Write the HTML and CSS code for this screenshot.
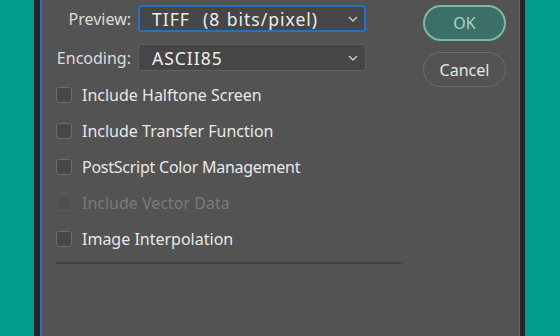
FILE: index.html
```html
<!DOCTYPE html>
<html lang="en">
<head>
<meta charset="utf-8" />
<title>EPS Options</title>
<link rel="stylesheet" href="styles.css">
</head>
<body>
	<div class="frame">
		<div class="dialog">
			<div class="main">
				<div class="fields">
					<label class="fieldLabel">Preview:</label>
					<div class="select focused">
						<span class="selectValue">TIFF&nbsp; (8 bits/pixel)</span>
						<svg class="chevron" width="10" height="6" viewBox="0 0 10 6"><path d="M1 1 L5 5 L9 1" fill="none" stroke="#c4c4c4" stroke-width="1.5"/></svg>
					</div>
					<label class="fieldLabel">Encoding:</label>
					<div class="select">
						<span class="selectValue">ASCII85</span>
						<svg class="chevron" width="10" height="6" viewBox="0 0 10 6"><path d="M1 1 L5 5 L9 1" fill="none" stroke="#c4c4c4" stroke-width="1.5"/></svg>
					</div>
				</div>

				<ul class="optionList">
					<li class="option"><span class="checkbox"></span>Include Halftone Screen</li>
					<li class="option"><span class="checkbox"></span>Include Transfer Function</li>
					<li class="option tight"><span class="checkbox"></span>PostScript Color Management</li>
					<li class="option disabled"><span class="checkbox"></span>Include Vector Data</li>
					<li class="option"><span class="checkbox"></span>Image Interpolation</li>
				</ul>
				<hr class="divider" />
			</div>
			<div class="buttons">
				<div class="button primary">OK</div>
				<div class="button">Cancel</div>
			</div>
		</div>
	</div>
</body>
</html>
```
FILE: styles.css
```css
html, body {
	margin: 0;
	height: 100%;
}

body {
	background-color: #009d8f;
	font-family: "Noto Sans", sans-serif;
	font-size: 16px;
	color: #e6e6e6;
	overflow: hidden;
}

.frame {
	margin-left: 34px;
	width: 480px;
	height: 100%;
	border-left: 6px solid #262626;
	border-right: 5px solid #262626;
}

.dialog {
	display: flex;
	height: 100%;
	background-color: #535353;
	border-left: 2px solid #2a6fc4;
	border-right: 1px solid #2a6fc4;
	padding-top: 5px;
	box-sizing: border-box;
}

.main {
	width: 346px;
	padding-left: 14px;
}

.fields {
	display: grid;
	grid-template-columns: 75px 228px;
	column-gap: 7px;
	row-gap: 12px;
	align-items: center;
}

.fieldLabel {
	text-align: right;
	color: #dcdcdc;
	white-space: nowrap;
}

.select {
	display: flex;
	align-items: center;
	justify-content: space-between;
	height: 27px;
	box-sizing: border-box;
	padding: 0 7px 0 13px;
	background-color: #464646;
	border: 1px solid #5f5f5f;
	border-radius: 3px;
}

.select.focused {
	border: 2px solid #2a6fc4;
	padding-left: 12px;
	padding-right: 6px;
}

.selectValue {
	color: #eeeeee;
	font-size: 17.5px;
	letter-spacing: 1px;
	word-spacing: 1px;
}

.optionList {
	list-style: none;
	margin: 6px 0 0 0;
	padding: 0;
}

.option {
	display: flex;
	align-items: center;
	height: 36px;
	color: #e8e8e8;
}

.option.tight {
	letter-spacing: -0.25px;
}

.checkbox {
	width: 16px;
	height: 16px;
	box-sizing: border-box;
	border: 1.5px solid #6d6d6d;
	border-radius: 3px;
	background-color: #474747;
	margin-right: 10px;
}

.option.disabled {
	color: #7a7a7a;
}

.option.disabled .checkbox {
	border-color: #595959;
	background-color: #4f4f4f;
}

.divider {
	margin: 5px 0 0 0;
	border: none;
	height: 2px;
	background-color: #444444;
}

.buttons {
	margin-left: auto;
	margin-right: 13px;
	display: flex;
	flex-direction: column;
	gap: 11px;
}

.button {
	width: 83px;
	height: 35px;
	box-sizing: border-box;
	border-radius: 18px;
	border: 1.5px solid #6b6b6b;
	display: flex;
	align-items: center;
	justify-content: center;
	color: #e6e6e6;
	font-size: 16px;
}

.button.primary {
	background-color: #3b6f67;
	border: 2px solid #7fb6ad;
	color: #a4d4cc;
	height: 36px;
}
```
